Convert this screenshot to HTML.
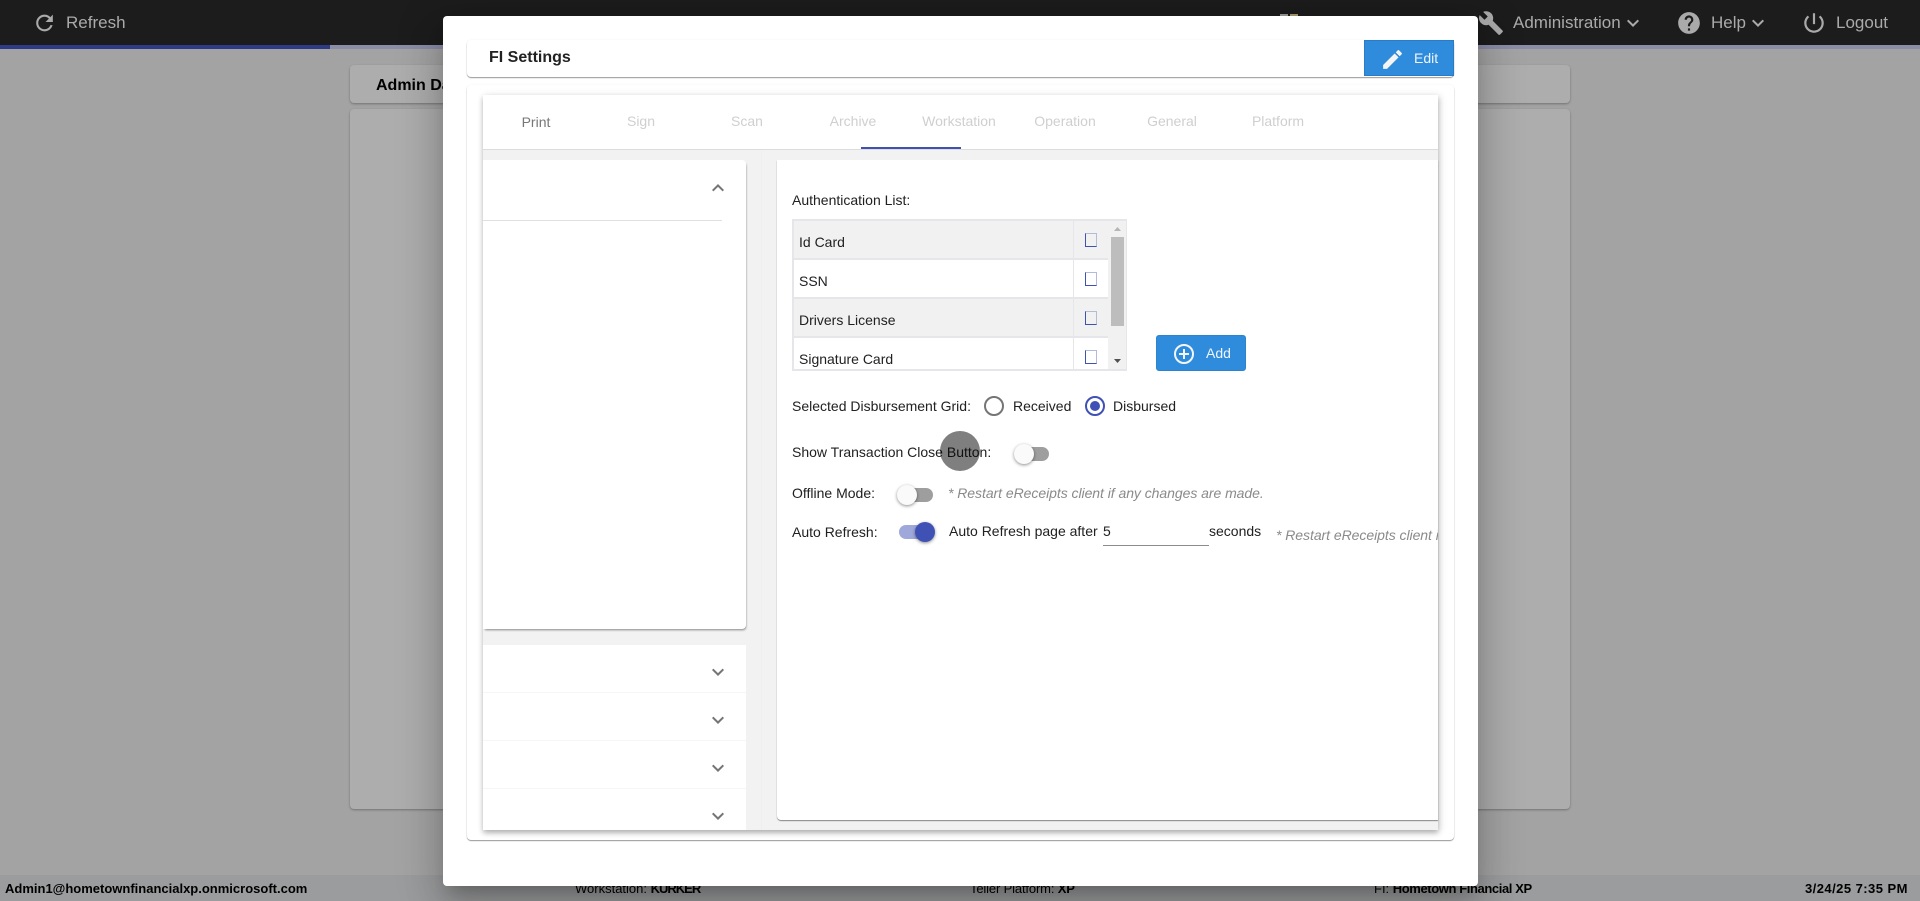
<!DOCTYPE html>
<html><head><meta charset="utf-8"><style>
html,body{margin:0;padding:0;width:1920px;height:901px;overflow:hidden;background:#a3a3a3;font-family:"Liberation Sans",Arial,sans-serif}
div,span.t{position:absolute;box-sizing:border-box}
.t{white-space:nowrap;line-height:20px;height:20px;font-size:14px;color:#212121}
svg{position:absolute;display:block}
.card{background:#adadad;border-radius:4px;box-shadow:0 1px 2px rgba(0,0,0,.3)}
.nav{color:#aaa;font-size:17px}
.tab{color:#cfcfcf;font-size:14px;text-align:center;width:100px}
.row{left:794px;width:314px;height:39px;border-bottom:2px solid #e6e6ea}
.cb{left:1085px;width:12px;height:14px;border:1px solid #3f51b5;border-top-color:#b4bada;border-right-color:#b4bada;background:transparent}
.note{font-style:italic;color:#8a8a8a;font-size:14px;letter-spacing:-.05px}
.track{height:14px;border-radius:7px;background:#9e9e9e}
.thumb{width:20px;height:20px;border-radius:50%;background:#fafafa;box-shadow:0 1px 3px rgba(0,0,0,.45)}
.st{font-size:13px;color:#000;top:879px}
.st b{font-weight:700}
</style></head><body>

<!-- top bar -->
<div style="left:0;top:0;width:1920px;height:45px;background:#1c1c1c"></div>
<div style="left:0;top:45px;width:1920px;height:4px;background:#8a8ca8"></div>
<div style="left:0;top:45px;width:330px;height:4px;background:#2f3a85"></div>
<svg style="left:32px;top:10px" width="25" height="26" viewBox="0 0 24 24" fill="#aaa"><path d="M17.65 6.35A7.958 7.958 0 0 0 12 4c-4.42 0-7.99 3.58-7.99 8s3.57 8 7.99 8c3.73 0 6.84-2.55 7.73-6h-2.08A5.99 5.99 0 0 1 12 18c-3.31 0-6-2.69-6-6s2.69-6 6-6c1.66 0 3.14.69 4.22 1.78L13 11h7V4l-2.35 2.35z"/></svg>
<span class="t nav" style="left:66px;top:13px">Refresh</span>
<div style="left:1280px;top:14px;width:8px;height:3px;background:#9a9a9a"></div>
<div style="left:1290px;top:14px;width:8px;height:3px;background:#a89a70"></div>
<svg style="left:1478px;top:10px" width="26" height="26" viewBox="0 0 24 24" fill="#aaa"><path d="M22.7 19l-9.1-9.1c.9-2.3.4-5-1.5-6.9-2-2-5-2.4-7.4-1.3L9 6 6 9 1.6 4.7C.4 7.1.9 10.1 2.9 12.1c1.9 1.9 4.6 2.4 6.9 1.5l9.1 9.1c.4.4 1 .4 1.4 0l2.3-2.3c.5-.4.5-1.1.1-1.4z"/></svg>
<span class="t nav" style="left:1513px;top:13px">Administration</span>
<svg style="left:1621px;top:11px" width="24" height="24" viewBox="0 0 24 24" fill="#aaa"><path d="M16.59 8.59L12 13.17 7.41 8.59 6 10l6 6 6-6z"/></svg>
<svg style="left:1676px;top:10px" width="26" height="26" viewBox="0 0 24 24" fill="#aaa"><path d="M12 2C6.48 2 2 6.48 2 12s4.48 10 10 10 10-4.48 10-10S17.52 2 12 2zm1 17h-2v-2h2v2zm2.07-7.75l-.9.92C13.45 12.9 13 13.5 13 15h-2v-.5c0-1.1.45-2.1 1.17-2.83l1.24-1.26c.37-.36.59-.86.59-1.41 0-1.1-.9-2-2-2s-2 .9-2 2H8c0-2.21 1.79-4 4-4s4 1.79 4 4c0 .88-.36 1.68-.93 2.25z"/></svg>
<span class="t nav" style="left:1711px;top:13px">Help</span>
<svg style="left:1746px;top:11px" width="24" height="24" viewBox="0 0 24 24" fill="#aaa"><path d="M16.59 8.59L12 13.17 7.41 8.59 6 10l6 6 6-6z"/></svg>
<svg style="left:1801px;top:10px" width="26" height="26" viewBox="0 0 24 24" fill="#aaa"><path d="M13 3h-2v10h2V3zm4.83 2.17l-1.42 1.42C17.99 7.86 19 9.81 19 12c0 3.87-3.13 7-7 7s-7-3.13-7-7c0-2.19 1.01-4.14 2.58-5.42L6.17 5.17C4.23 6.82 3 9.26 3 12c0 4.97 4.03 9 9 9s9-4.03 9-9c0-2.74-1.23-5.18-3.17-6.83z"/></svg>
<span class="t nav" style="left:1836px;top:13px">Logout</span>

<!-- background cards -->
<div class="card" style="left:350px;top:65px;width:1220px;height:38px"></div>
<span class="t" style="left:376px;top:76px;font-weight:700;font-size:16px;color:#000">Admin Dashboard</span>
<div class="card" style="left:350px;top:109px;width:1220px;height:700px"></div>

<!-- status bar -->
<div style="left:0;top:875px;width:1920px;height:26px;background:#9b9c9d"></div>
<span class="t st" style="left:5px"><b>Admin1@hometownfinancialxp.onmicrosoft.com</b></span>
<span class="t st" style="left:575px">Workstation: <b style="letter-spacing:-1px">KURKER</b></span>
<span class="t st" style="left:970px;letter-spacing:-.15px">Teller Platform: <b>XP</b></span>
<span class="t st" style="left:1374px">FI: <b style="letter-spacing:-.4px">Hometown Financial XP</b></span>
<span class="t st" style="left:1805px;letter-spacing:.45px"><b>3/24/25 7:35 PM</b></span>

<!-- modal -->
<div style="left:443px;top:16px;width:1035px;height:870px;background:#fff;border-radius:4px;box-shadow:0 11px 15px -7px rgba(0,0,0,.2),0 24px 38px 3px rgba(0,0,0,.14),0 9px 46px 8px rgba(0,0,0,.12)"></div>

<!-- header card -->
<div style="left:467px;top:40px;width:987px;height:37px;background:#fff;border-radius:4px;box-shadow:0 1px 1px rgba(0,0,0,.4),0 0 2px rgba(0,0,0,.05)"></div>
<span class="t" style="left:489px;top:48px;font-weight:700;font-size:16px;color:#222">FI Settings</span>
<div style="left:1364px;top:40px;width:90px;height:36px;background:#2f8cdc;border:1px solid #2a7cc4"></div>
<svg style="left:1380px;top:47px" width="25" height="25" viewBox="0 0 24 24" fill="#f5f5f5"><path d="M3 17.25V21h3.75L17.81 9.94l-3.75-3.75L3 17.25zM20.71 7.04a1 1 0 0 0 0-1.41l-2.34-2.34a1 1 0 0 0-1.41 0l-1.83 1.83 3.75 3.75 1.83-1.83z"/></svg>
<span class="t" style="left:1414px;top:48px;color:#f0f4fa;font-size:14px">Edit</span>

<!-- body card -->
<div style="left:467px;top:85px;width:987px;height:755px;background:#fff;border-radius:4px;box-shadow:0 1px 1px rgba(0,0,0,.4),0 0 2px rgba(0,0,0,.05)"></div>

<!-- inner panel -->
<div style="left:483px;top:95px;width:955px;height:735px;background:#f2f2f2;box-shadow:0 3px 5px rgba(0,0,0,.25),2px 1px 8px rgba(0,0,0,.12)"></div>
<div style="left:483px;top:95px;width:955px;height:55px;background:#fff;border-bottom:1px solid #dcdcdc"></div>
<span class="t tab" style="left:486px;top:112px;color:#777">Print</span>
<span class="t tab" style="left:591px;top:111px">Sign</span>
<span class="t tab" style="left:697px;top:111px">Scan</span>
<span class="t tab" style="left:803px;top:111px">Archive</span>
<span class="t tab" style="left:909px;top:111px">Workstation</span>
<span class="t tab" style="left:1015px;top:111px">Operation</span>
<span class="t tab" style="left:1122px;top:111px">General</span>
<span class="t tab" style="left:1228px;top:111px">Platform</span>
<div style="left:861px;top:147px;width:100px;height:2px;background:#3f51b5"></div>

<div style="left:761px;top:150px;width:1px;height:680px;background:#efefef"></div>

<!-- left panels -->
<div style="left:483px;top:160px;width:263px;height:469px;background:#fff;border-radius:0 4px 4px 0;box-shadow:1px 2px 2px -1px rgba(0,0,0,.45)"></div>
<div style="left:483px;top:220px;width:239px;height:1px;background:#e0e0e0"></div>
<svg style="left:706px;top:176px" width="24" height="24" viewBox="0 0 24 24" fill="#757575"><path d="M12 8l-6 6 1.41 1.41L12 10.83l4.59 4.58L18 14z"/></svg>
<div style="left:483px;top:645px;width:263px;height:185px;background:#fff"></div>
<div style="left:483px;top:692px;width:263px;height:1px;background:#f6f6f6"></div>
<div style="left:483px;top:740px;width:263px;height:1px;background:#f6f6f6"></div>
<div style="left:483px;top:788px;width:263px;height:1px;background:#f6f6f6"></div>
<svg style="left:706px;top:660px" width="24" height="24" viewBox="0 0 24 24" fill="#757575"><path d="M16.59 8.59L12 13.17 7.41 8.59 6 10l6 6 6-6z"/></svg>
<svg style="left:706px;top:708px" width="24" height="24" viewBox="0 0 24 24" fill="#757575"><path d="M16.59 8.59L12 13.17 7.41 8.59 6 10l6 6 6-6z"/></svg>
<svg style="left:706px;top:756px" width="24" height="24" viewBox="0 0 24 24" fill="#757575"><path d="M16.59 8.59L12 13.17 7.41 8.59 6 10l6 6 6-6z"/></svg>
<svg style="left:706px;top:804px" width="24" height="24" viewBox="0 0 24 24" fill="#757575"><path d="M16.59 8.59L12 13.17 7.41 8.59 6 10l6 6 6-6z"/></svg>

<!-- right panel -->
<div style="left:777px;top:160px;width:661px;height:660px;background:#fff;border-radius:0 0 0 4px;box-shadow:0 1px 1px rgba(0,0,0,.45)"></div>

<span class="t" style="left:792px;top:190px">Authentication List:</span>

<!-- table -->
<div style="left:792px;top:219px;width:335px;height:152px;border:2px solid #e6e6ea;background:#fff;overflow:hidden"></div>
<div class="row" style="top:221px;background:#f1f1f1"></div>
<div class="row" style="top:260px;background:#fff"></div>
<div class="row" style="top:299px;background:#f1f1f1"></div>
<div style="left:794px;top:338px;width:314px;height:31px;background:#fff"></div>
<div style="left:1073px;top:221px;width:1px;height:148px;background:#e6e6ea"></div>
<div style="left:1108px;top:221px;width:18px;height:148px;background:#f1f1f1"></div>
<div style="left:1111px;top:237px;width:13px;height:89px;background:#bdbdbd"></div>
<svg style="left:1113px;top:226px" width="9" height="6" viewBox="0 0 9 6"><path d="M4.5 1L8 5H1z" fill="#b5b5b5"/></svg>
<svg style="left:1113px;top:358px" width="9" height="6" viewBox="0 0 9 6"><path d="M1 1h7L4.5 5z" fill="#505050"/></svg>
<span class="t" style="left:799px;top:232px">Id Card</span>
<span class="t" style="left:799px;top:271px">SSN</span>
<span class="t" style="left:799px;top:310px">Drivers License</span>
<span class="t" style="left:799px;top:349px">Signature Card</span>
<div class="cb" style="top:233px"></div>
<div class="cb" style="top:272px"></div>
<div class="cb" style="top:311px"></div>
<div class="cb" style="top:350px"></div>

<!-- add -->
<div style="left:1156px;top:335px;width:90px;height:36px;background:#2f8cdc;border-radius:3px;border:1px solid #2c84d0"></div>
<svg style="left:1173px;top:343px" width="22" height="22" viewBox="0 0 22 22" fill="none" stroke="#f2f6fb" stroke-width="2"><circle cx="11" cy="11" r="9"/><path d="M11 6v10M6 11h10"/></svg>
<span class="t" style="left:1206px;top:343px;color:#f0f4fa">Add</span>

<!-- radio -->
<span class="t" style="left:792px;top:396px">Selected Disbursement Grid:</span>
<div style="left:984px;top:396px;width:20px;height:20px;border-radius:50%;border:2px solid #757575"></div>
<span class="t" style="left:1013px;top:396px">Received</span>
<div style="left:1085px;top:396px;width:20px;height:20px;border-radius:50%;border:2px solid #3f51b5"></div>
<div style="left:1090px;top:401px;width:10px;height:10px;border-radius:50%;background:#3f51b5"></div>
<span class="t" style="left:1113px;top:396px">Disbursed</span>

<!-- show transaction -->
<span class="t" style="left:792px;top:442px">Show Transaction Close Button:</span>
<div style="left:940px;top:431px;width:40px;height:40px;border-radius:50%;background:rgba(0,0,0,.5)"></div>
<div class="track" style="left:1020px;top:447px;width:29px"></div>
<div class="thumb" style="left:1014px;top:444px"></div>

<!-- offline -->
<span class="t" style="left:792px;top:483px">Offline Mode:</span>
<div class="track" style="left:904px;top:488px;width:29px"></div>
<div class="thumb" style="left:897px;top:485px"></div>
<span class="t note" style="left:948px;top:483px">* Restart eReceipts client if any changes are made.</span>

<!-- auto refresh -->
<span class="t" style="left:792px;top:522px">Auto Refresh:</span>
<div class="track" style="left:899px;top:525px;width:29px;background:#9fa8da"></div>
<div class="thumb" style="left:915px;top:522px;background:#3f51b5"></div>
<span class="t" style="left:949px;top:521px">Auto Refresh page after</span>
<span class="t" style="left:1103px;top:521px">5</span>
<div style="left:1103px;top:545px;width:106px;height:1px;background:#8c8c8c"></div>
<span class="t" style="left:1209px;top:521px">seconds</span>
<div style="left:1276px;top:525px;width:162px;height:20px;overflow:hidden"><span class="t note" style="left:0;top:0">* Restart eReceipts client if any changes are made.</span></div>

</body></html>
